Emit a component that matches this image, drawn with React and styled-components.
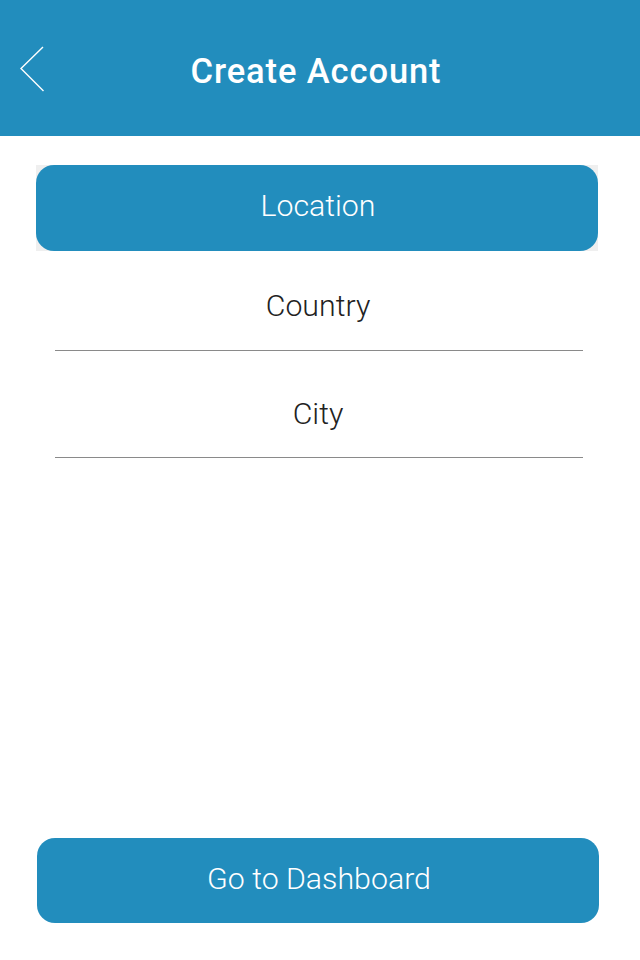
import React from "react";
import styled, { createGlobalStyle } from "styled-components";

const Global = createGlobalStyle`
  html, body { margin: 0; padding: 0; background: #fff; }
  body { font-family: Roboto, "Noto Sans", sans-serif; }
  #root { min-height: 960px; }
`;

const Screen = styled.div`
  width: 640px;
  height: 960px;
  display: flex;
  flex-direction: column;
  background: #ffffff;
`;

const Header = styled.header`
  height: 136px;
  background: #228dbd;
  display: flex;
  align-items: center;
  justify-content: center;
  position: relative;
  flex-shrink: 0;
`;

const BackButton = styled.button`
  position: absolute;
  left: 18px;
  top: 44px;
  width: 30px;
  height: 50px;
  padding: 0;
  border: none;
  background: transparent;
  display: flex;
  align-items: center;
  justify-content: center;
`;

const Title = styled.h1`
  margin: 0;
  color: #ffffff;
  font-family: Roboto, sans-serif;
  font-weight: 500;
  font-size: 34.5px;
  letter-spacing: 0.9px;
  transform: translate(-4px, 3px);
`;

const Body = styled.main`
  flex: 1;
  display: flex;
  flex-direction: column;
  padding: 29px 42px 37px 36px;
`;

const SectionWrap = styled.div`
  background: #efefef;
  height: 86px;
  width: 562px;
`;

const PrimaryButton = styled.button`
  width: 562px;
  height: ${(p) => p.$h || 86}px;
  border: none;
  border-radius: 18px;
  background: #228dbd;
  color: #ffffff;
  font-family: Roboto, sans-serif;
  font-weight: 300;
  font-size: 30.3px;
  display: flex;
  align-items: center;
  justify-content: center;
  padding: 0 0 ${(p) => p.$pb || 5}px 2px;
  cursor: pointer;
`;

const Fields = styled.div`
  display: flex;
  flex-direction: column;
  padding: 0 15px 0 19px;
`;

const Field = styled.div`
  height: ${(p) => p.$h}px;
  border-bottom: 1px solid #8a8a8a;
  display: flex;
  align-items: center;
  justify-content: center;
  font-family: Roboto, sans-serif;
  font-weight: 300;
  font-size: 30.3px;
  color: #222222;
`;

const FieldText = styled.span`
  transform: translate(-1px, ${(p) => p.$dy || 0}px);
`;

const Spacer = styled.div`
  flex: 1;
`;

const Footer = styled.div`
  padding-left: 1px;
`;

export default function App() {
  return (
    <>
      <Global />
      <Screen>
        <Header>
          <BackButton aria-label="Back">
            <svg width="30" height="50" viewBox="0 0 30 50">
              <polyline
                points="25,3 3,24.5 25.5,47"
                fill="none"
                stroke="#ffffff"
                strokeWidth="1.4"
              />
            </svg>
          </BackButton>
          <Title>Create Account</Title>
        </Header>
        <Body>
          <SectionWrap>
            <PrimaryButton>Location</PrimaryButton>
          </SectionWrap>
          <Fields>
            <Field $h={99}>
              <FieldText $dy={5}>Country</FieldText>
            </Field>
            <Field $h={106}>
              <FieldText $dy={9}>City</FieldText>
            </Field>
          </Fields>
          <Spacer />
          <Footer>
            <PrimaryButton $h={85} $pb={4}>Go to Dashboard</PrimaryButton>
          </Footer>
        </Body>
      </Screen>
    </>
  );
}
